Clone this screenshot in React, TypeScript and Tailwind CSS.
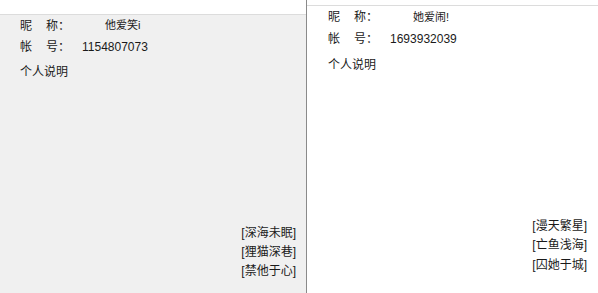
const font = { fontFamily: '"Liberation Sans", "Noto Sans CJK SC", sans-serif' }

type Profile = {
  nick: string
  id: string
  tags: string[]
}

function Info({ p, nickLeft, idLeft }: { p: Profile; nickLeft: string; idLeft: string }) {
  return (
    <div className="text-[12px] text-[#1a1a1a]">
      <div className="flex h-[21px] items-center">
        <span className="w-[26px]">昵</span>
        <span>称：</span>
        <span className={`${nickLeft} text-[11px]`}>{p.nick}</span>
      </div>
      <div className="flex h-[21px] items-center">
        <span className="w-[26px]">帐</span>
        <span>号：</span>
        <span className={idLeft}>{p.id}</span>
      </div>
      <div className="mt-[4px] flex h-[21px] items-center">个人说明</div>
    </div>
  )
}

export default function App() {
  const left: Profile = { nick: '他爱笑i', id: '1154807073', tags: ['[深海未眠]', '[狸猫深巷]', '[禁他于心]'] }
  const right: Profile = { nick: '她爱闹!', id: '1693932039', tags: ['[漫天繁星]', '[亡鱼浅海]', '[囚她于城]'] }

  return (
    <div className="flex h-[293px] w-[598px] overflow-hidden bg-white" style={font}>
      {/* left card */}
      <div className="flex w-[307px] flex-col border-r border-[#8a8a8a]">
        <div className="h-[15px] shrink-0 border-b border-[#dcdcdc] bg-white" />
        <div className="flex flex-1 flex-col bg-[#f0f0f0] pl-[20px]">
          <Info p={left} nickLeft="ml-[35px]" idLeft="ml-[12px]" />
          <div className="mt-auto flex flex-col items-end pb-[12px] pr-[10px] text-[12px] leading-[19px] text-[#1a1a1a]">
            {left.tags.map((t) => (
              <span key={t}>{t}</span>
            ))}
          </div>
        </div>
      </div>

      {/* right card */}
      <div className="flex flex-1 flex-col">
        <div className="h-[6px] shrink-0 border-b border-[#dcdcdc]" />
        <div className="flex flex-1 flex-col pl-[21px]">
          <div className="[&>div>div]:h-[22px]">
            <Info p={right} nickLeft="ml-[35px]" idLeft="ml-[12px]" />
          </div>
          <div className="mt-auto flex flex-col items-end pb-[18px] pr-[11px] text-[12px] leading-[19.5px] text-[#1a1a1a]">
            {right.tags.map((t) => (
              <span key={t}>{t}</span>
            ))}
          </div>
        </div>
      </div>
    </div>
  )
}
